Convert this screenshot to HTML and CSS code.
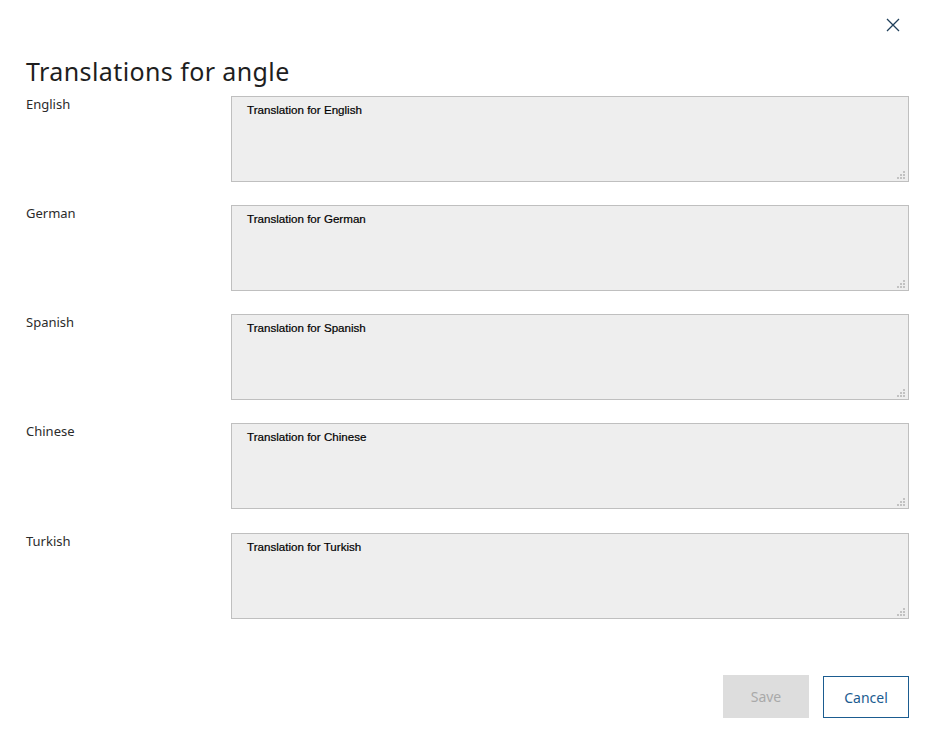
FILE: index.html
```html
<!DOCTYPE html>
<html>
<head>
<meta charset="utf-8">
<link rel="stylesheet" href="styles.css">
</head>
<body>
<div class="dialog">
  <div class="topbar">
    <button class="close" aria-label="Close">
      <svg width="14" height="14" viewBox="0 0 14 14"><path d="M1 1 L13 13 M13 1 L1 13" stroke="#1f3f5a" stroke-width="1.3" fill="none"/></svg>
    </button>
  </div>
  <h1 class="title">Translations for angle</h1>
  <div class="rows">
    <div class="row"><label class="lbl">English</label><div class="field"><textarea class="ta">Translation for English</textarea><span class="grip"></span></div></div>
    <div class="row"><label class="lbl">German</label><div class="field"><textarea class="ta">Translation for German</textarea><span class="grip"></span></div></div>
    <div class="row"><label class="lbl">Spanish</label><div class="field"><textarea class="ta">Translation for Spanish</textarea><span class="grip"></span></div></div>
    <div class="row"><label class="lbl">Chinese</label><div class="field"><textarea class="ta">Translation for Chinese</textarea><span class="grip"></span></div></div>
    <div class="row last"><label class="lbl">Turkish</label><div class="field"><textarea class="ta">Translation for Turkish</textarea><span class="grip"></span></div></div>
  </div>
  <div class="actions">
    <button class="btn save" disabled>Save</button>
    <button class="btn cancel">Cancel</button>
  </div>
</div>
</body>
</html>
```
FILE: styles.css
```css
html, body {
  margin: 0;
  padding: 0;
  background: #fff;
}
body {
  font-family: "Noto Sans", "Open Sans", sans-serif;
  color: #2b2b2b;
}
.dialog {
  width: 933px;
  height: 744px;
  box-sizing: border-box;
  padding: 0 24px 0 26px;
  display: flex;
  flex-direction: column;
}
.topbar {
  height: 52px;
  display: flex;
  justify-content: flex-end;
  align-items: flex-start;
  padding-top: 18px;
  box-sizing: border-box;
}
.close {
  border: 0;
  background: none;
  padding: 0;
  margin-right: 9px;
  width: 14px;
  height: 14px;
  cursor: pointer;
  display: block;
}
.close svg { display: block; }
.title {
  margin: 0;
  font-family: "Noto Sans", sans-serif;
  font-weight: 400;
  font-size: 25px;
  line-height: 38px;
  color: #1e1e1e;
  letter-spacing: 0.4px;
}
.rows {
  display: flex;
  flex-direction: column;
  gap: 23px;
  margin-top: 6px;
}
.row {
  display: flex;
  align-items: flex-start;
}
.row.last { margin-top: 1px; }
.lbl {
  width: 205px;
  font-size: 13px;
  line-height: 16px;
  color: #2b2b2b;
}
.field {
  position: relative;
  width: 678px;
  height: 86px;
}
.ta {
  display: block;
  width: 100%;
  height: 100%;
  box-sizing: border-box;
  margin: 0;
  resize: none;
  background: #eeeeee;
  border: 1px solid #bfbfbf;
  border-radius: 0;
  padding: 5px 15px;
  font-family: "Liberation Sans", Arial, sans-serif;
  font-size: 11.6px;
  line-height: 15px;
  color: #000;
  -webkit-text-stroke: 0.2px #000;
  outline: none;
}
.grip {
  position: absolute;
  right: 4px;
  bottom: 3px;
  width: 8px;
  height: 8px;
  background:
    linear-gradient(#c2c2c2, #c2c2c2) 6px 0 / 2px 2px no-repeat,
    linear-gradient(#c2c2c2, #c2c2c2) 3px 3px / 2px 2px no-repeat,
    linear-gradient(#c2c2c2, #c2c2c2) 6px 3px / 2px 2px no-repeat,
    linear-gradient(#c2c2c2, #c2c2c2) 0 6px / 2px 2px no-repeat,
    linear-gradient(#c2c2c2, #c2c2c2) 3px 6px / 2px 2px no-repeat,
    linear-gradient(#c2c2c2, #c2c2c2) 6px 6px / 2px 2px no-repeat;
}
.actions {
  margin-top: auto;
  margin-bottom: 26px;
  display: flex;
  justify-content: flex-end;
  gap: 14px;
}
.btn {
  width: 86px;
  height: 42px;
  box-sizing: border-box;
  font-family: "Noto Sans", sans-serif;
  font-size: 14px;
  border-radius: 0;
  padding: 0;
}
.save {
  background: #dddddd;
  border: 0;
  color: #a9a9a9;
  height: 43px;
  margin-top: -1px;
}
.cancel {
  background: #fff;
  border: 1px solid #1b5c90;
  color: #1b5c90;
}
```
